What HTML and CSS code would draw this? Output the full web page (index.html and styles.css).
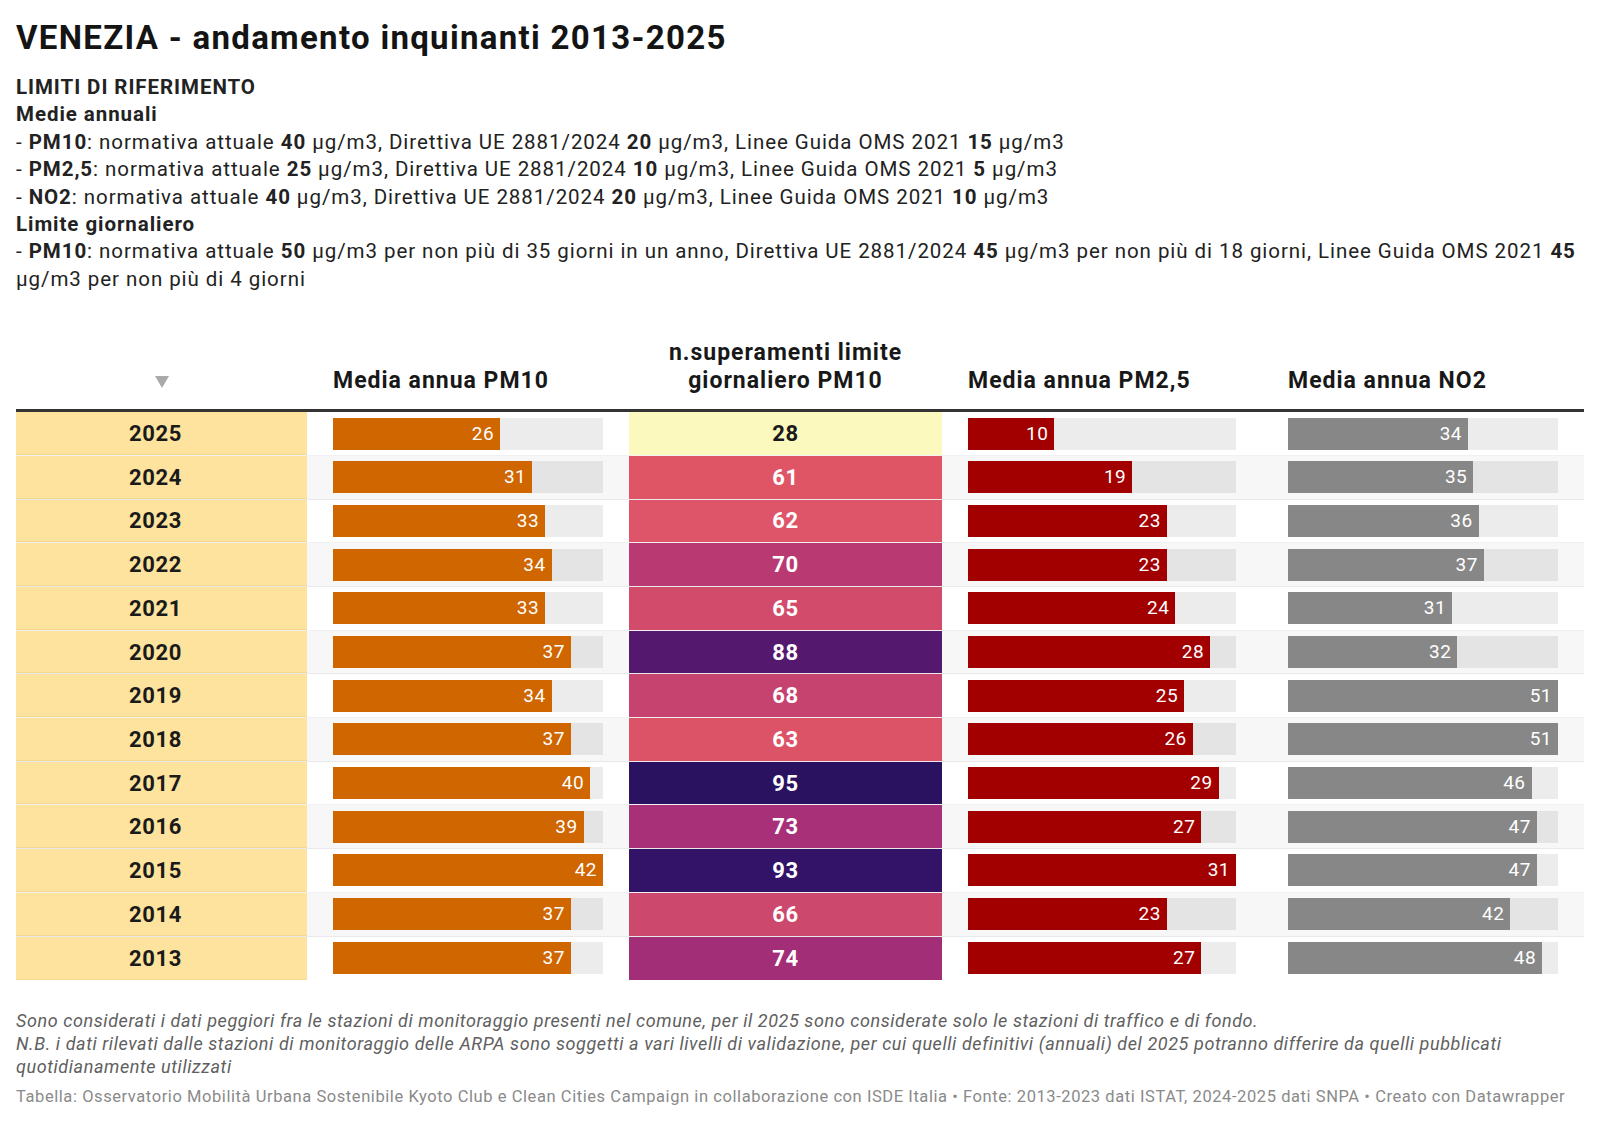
FILE: index.html
```html
<!DOCTYPE html>
<html lang="it">
<head>
<meta charset="utf-8">
<title>VENEZIA - andamento inquinanti 2013-2025</title>
<link rel="stylesheet" href="styles.css">
</head>
<body>
<div class="chart">
  <h1 class="title">VENEZIA - andamento inquinanti 2013-2025</h1>
  <div class="desc">
    <div class="strong">LIMITI DI RIFERIMENTO</div>
    <div class="strong">Medie annuali</div>
    <div>- <b>PM10</b>: normativa attuale <b>40</b> µg/m3, Direttiva UE 2881/2024 <b>20</b> µg/m3, Linee Guida OMS 2021 <b>15</b> µg/m3</div>
    <div>- <b>PM2,5</b>: normativa attuale <b>25</b> µg/m3, Direttiva UE 2881/2024 <b>10</b> µg/m3, Linee Guida OMS 2021 <b>5</b> µg/m3</div>
    <div>- <b>NO2</b>: normativa attuale <b>40</b> µg/m3, Direttiva UE 2881/2024 <b>20</b> µg/m3, Linee Guida OMS 2021 <b>10</b> µg/m3</div>
    <div class="strong">Limite giornaliero</div>
    <div>- <b>PM10</b>: normativa attuale <b>50</b> µg/m3 per non più di 35 giorni in un anno, Direttiva UE 2881/2024 <b>45</b> µg/m3 per non più di 18 giorni, Linee Guida OMS 2021 <b>45</b> µg/m3 per non più di 4 giorni</div>
  </div>

  <div class="table">
    <div class="row head">
      <div class="th th-year"><span class="sort"></span></div>
      <div class="th th-bar">Media annua PM10</div>
      <div class="th th-center">n.superamenti limite<br>giornaliero PM10</div>
      <div class="th th-bar">Media annua PM2,5</div>
      <div class="th th-bar">Media annua NO2</div>
    </div>

    <div class="row">
      <div class="td year">2025</div>
      <div class="td barcell"><div class="track"><div class="bar pm10" style="width:61.905%">26</div></div></div>
      <div class="td heat dark" style="background:#fbf9bd">28</div>
      <div class="td barcell"><div class="track"><div class="bar pm25" style="width:32.258%">10</div></div></div>
      <div class="td barcell"><div class="track"><div class="bar no2" style="width:66.667%">34</div></div></div>
    </div>
    <div class="row alt">
      <div class="td year">2024</div>
      <div class="td barcell"><div class="track"><div class="bar pm10" style="width:73.810%">31</div></div></div>
      <div class="td heat" style="background:#e05566">61</div>
      <div class="td barcell"><div class="track"><div class="bar pm25" style="width:61.290%">19</div></div></div>
      <div class="td barcell"><div class="track"><div class="bar no2" style="width:68.627%">35</div></div></div>
    </div>
    <div class="row">
      <div class="td year">2023</div>
      <div class="td barcell"><div class="track"><div class="bar pm10" style="width:78.571%">33</div></div></div>
      <div class="td heat" style="background:#de5468">62</div>
      <div class="td barcell"><div class="track"><div class="bar pm25" style="width:74.194%">23</div></div></div>
      <div class="td barcell"><div class="track"><div class="bar no2" style="width:70.588%">36</div></div></div>
    </div>
    <div class="row alt">
      <div class="td year">2022</div>
      <div class="td barcell"><div class="track"><div class="bar pm10" style="width:80.952%">34</div></div></div>
      <div class="td heat" style="background:#b93a73">70</div>
      <div class="td barcell"><div class="track"><div class="bar pm25" style="width:74.194%">23</div></div></div>
      <div class="td barcell"><div class="track"><div class="bar no2" style="width:72.549%">37</div></div></div>
    </div>
    <div class="row">
      <div class="td year">2021</div>
      <div class="td barcell"><div class="track"><div class="bar pm10" style="width:78.571%">33</div></div></div>
      <div class="td heat" style="background:#d24b6b">65</div>
      <div class="td barcell"><div class="track"><div class="bar pm25" style="width:77.419%">24</div></div></div>
      <div class="td barcell"><div class="track"><div class="bar no2" style="width:60.784%">31</div></div></div>
    </div>
    <div class="row alt">
      <div class="td year">2020</div>
      <div class="td barcell"><div class="track"><div class="bar pm10" style="width:88.095%">37</div></div></div>
      <div class="td heat" style="background:#54186f">88</div>
      <div class="td barcell"><div class="track"><div class="bar pm25" style="width:90.323%">28</div></div></div>
      <div class="td barcell"><div class="track"><div class="bar no2" style="width:62.745%">32</div></div></div>
    </div>
    <div class="row">
      <div class="td year">2019</div>
      <div class="td barcell"><div class="track"><div class="bar pm10" style="width:80.952%">34</div></div></div>
      <div class="td heat" style="background:#c6426f">68</div>
      <div class="td barcell"><div class="track"><div class="bar pm25" style="width:80.645%">25</div></div></div>
      <div class="td barcell"><div class="track"><div class="bar no2" style="width:100%">51</div></div></div>
    </div>
    <div class="row alt">
      <div class="td year">2018</div>
      <div class="td barcell"><div class="track"><div class="bar pm10" style="width:88.095%">37</div></div></div>
      <div class="td heat" style="background:#dc5267">63</div>
      <div class="td barcell"><div class="track"><div class="bar pm25" style="width:83.871%">26</div></div></div>
      <div class="td barcell"><div class="track"><div class="bar no2" style="width:100%">51</div></div></div>
    </div>
    <div class="row">
      <div class="td year">2017</div>
      <div class="td barcell"><div class="track"><div class="bar pm10" style="width:95.238%">40</div></div></div>
      <div class="td heat" style="background:#2b1261">95</div>
      <div class="td barcell"><div class="track"><div class="bar pm25" style="width:93.548%">29</div></div></div>
      <div class="td barcell"><div class="track"><div class="bar no2" style="width:90.196%">46</div></div></div>
    </div>
    <div class="row alt">
      <div class="td year">2016</div>
      <div class="td barcell"><div class="track"><div class="bar pm10" style="width:92.857%">39</div></div></div>
      <div class="td heat" style="background:#a73079">73</div>
      <div class="td barcell"><div class="track"><div class="bar pm25" style="width:87.097%">27</div></div></div>
      <div class="td barcell"><div class="track"><div class="bar no2" style="width:92.157%">47</div></div></div>
    </div>
    <div class="row">
      <div class="td year">2015</div>
      <div class="td barcell"><div class="track"><div class="bar pm10" style="width:100%">42</div></div></div>
      <div class="td heat" style="background:#331367">93</div>
      <div class="td barcell"><div class="track"><div class="bar pm25" style="width:100%">31</div></div></div>
      <div class="td barcell"><div class="track"><div class="bar no2" style="width:92.157%">47</div></div></div>
    </div>
    <div class="row alt">
      <div class="td year">2014</div>
      <div class="td barcell"><div class="track"><div class="bar pm10" style="width:88.095%">37</div></div></div>
      <div class="td heat" style="background:#cd486d">66</div>
      <div class="td barcell"><div class="track"><div class="bar pm25" style="width:74.194%">23</div></div></div>
      <div class="td barcell"><div class="track"><div class="bar no2" style="width:82.353%">42</div></div></div>
    </div>
    <div class="row last">
      <div class="td year">2013</div>
      <div class="td barcell"><div class="track"><div class="bar pm10" style="width:88.095%">37</div></div></div>
      <div class="td heat" style="background:#a32e78">74</div>
      <div class="td barcell"><div class="track"><div class="bar pm25" style="width:87.097%">27</div></div></div>
      <div class="td barcell"><div class="track"><div class="bar no2" style="width:94.118%">48</div></div></div>
    </div>
  </div>

  <div class="notes">
    <div>Sono considerati i dati peggiori fra le stazioni di monitoraggio presenti nel comune, per il 2025 sono considerate solo le stazioni di traffico e di fondo.</div>
    <div>N.B. i dati rilevati dalle stazioni di monitoraggio delle ARPA sono soggetti a vari livelli di validazione, per cui quelli definitivi (annuali) del 2025 potranno differire da quelli pubblicati quotidianamente utilizzati</div>
  </div>
  <div class="source">Tabella: Osservatorio Mobilità Urbana Sostenibile Kyoto Club e Clean Cities Campaign in collaborazione con ISDE Italia • Fonte: 2013-2023 dati ISTAT, 2024-2025 dati SNPA • Creato con Datawrapper</div>
</div>
</body>
</html>
```

FILE: styles.css
```css
html, body {
  margin: 0;
  padding: 0;
  background: #ffffff;
}

body {
  font-family: Roboto, "Liberation Sans", sans-serif;
  color: #1d1d1d;
}

.chart {
  width: 1568px;
  padding: 19px 16px 0 16px;
}

.title {
  margin: 0;
  font-size: 33px;
  line-height: 37px;
  font-weight: 700;
  letter-spacing: 1.3px;
  color: #141414;
}

.desc {
  margin-top: 18px;
  font-size: 20.5px;
  line-height: 27.4px;
  letter-spacing: 0.94px;
  color: #222;
}

.desc .strong {
  font-weight: 700;
}

.desc b {
  font-weight: 700;
}

.table {
  margin-top: 46px;
}

.row {
  display: grid;
  grid-template-columns: 291px 322px 313px 320px 322px;
  height: 43.7px;
  box-sizing: border-box;
  border-bottom: 1px solid rgba(0, 0, 0, 0.055);
}

.row.alt {
  background: #f7f7f7;
}

.row.last {
  border-bottom: none;
}

.row.head {
  height: auto;
  align-items: end;
  padding-bottom: 14px;
  border-bottom: 3px solid #333;
}

.th {
  font-size: 23px;
  line-height: 28px;
  font-weight: 700;
  letter-spacing: 1px;
  color: #181818;
}

.th-year {
  display: flex;
  justify-content: center;
  padding-bottom: 7px;
}

.sort {
  width: 0;
  height: 0;
  border-left: 7px solid transparent;
  border-right: 7px solid transparent;
  border-top: 12px solid #aaaaaa;
}

.th-bar {
  padding-left: 26px;
}

.th-center {
  text-align: center;
}

.td {
  display: flex;
  align-items: center;
}

.year {
  background: #fde39d;
  justify-content: center;
  padding-right: 12px;
  font-size: 22px;
  font-weight: 700;
  letter-spacing: 0.6px;
  color: #1a1a1a;
}

.row .year {
  box-shadow: inset 0 -1px 0 rgba(180, 140, 40, 0.12);
}

.barcell {
  padding: 0 26px;
}

.track {
  width: 270px;
  height: 32px;
  background: rgba(0, 0, 0, 0.075);
  display: flex;
}

.bar {
  height: 32px;
  box-sizing: border-box;
  padding-right: 6px;
  text-align: right;
  font-size: 19px;
  line-height: 32px;
  letter-spacing: 0.5px;
  color: #ffffff;
}

.pm10 {
  background: #cf6600;
}

.pm25 {
  background: #a20000;
}

.no2 {
  background: #878787;
}

.heat {
  justify-content: center;
  font-size: 22px;
  font-weight: 700;
  letter-spacing: 0.6px;
  color: #ffffff;
}

.heat.dark {
  color: #1a1a1a;
}

.notes {
  margin-top: 29px;
  font-size: 18px;
  line-height: 23px;
  font-style: italic;
  letter-spacing: 0.58px;
  color: #606060;
}

.source {
  margin-top: 7px;
  font-size: 16.5px;
  line-height: 23px;
  letter-spacing: 0.57px;
  color: #8a8a8a;
}
```
